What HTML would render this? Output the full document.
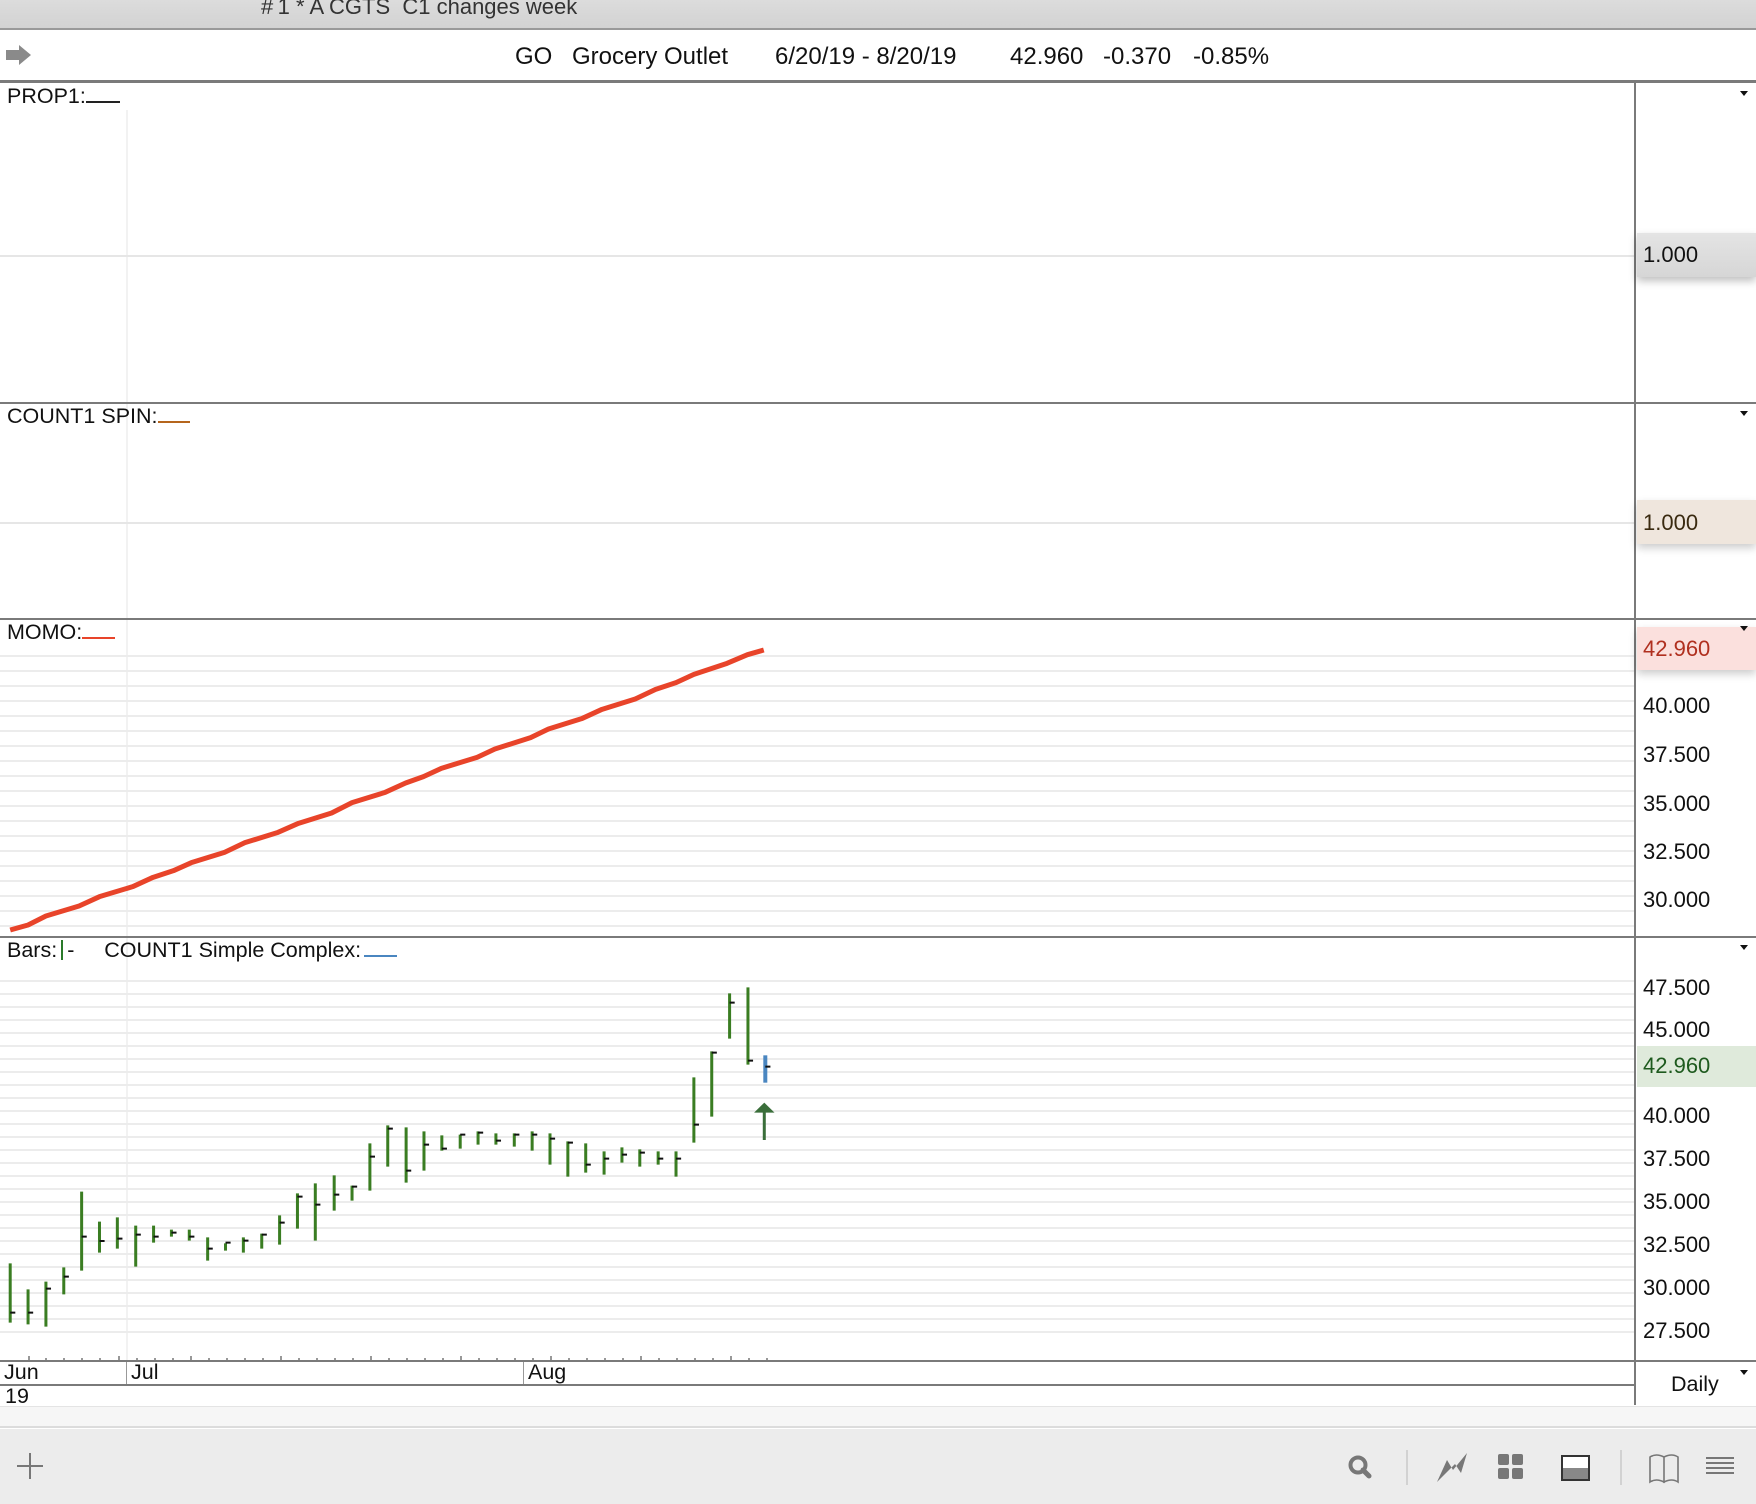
<!DOCTYPE html>
<html><head><meta charset="utf-8"><style>
*{margin:0;padding:0;box-sizing:border-box}
body{width:1756px;height:1504px;background:#fff;position:relative;overflow:hidden;font-family:"Liberation Sans",Arial,sans-serif;color:#111}
.a{position:absolute;white-space:nowrap}
.hl{position:absolute;left:0;height:2px;background:#7a7a7a}
.lbl{font-size:21.5px}
.ax{font-size:22px;left:1643px}
.tri{position:absolute;left:1740px;width:0;height:0;border-left:4px solid transparent;border-right:4px solid transparent;border-top:5px solid #111}
.grid{position:absolute;left:0;width:1634px;background:repeating-linear-gradient(to bottom,#ececec 0,#ececec 2px,transparent 2px,transparent 15px)}
.h{top:43px;font-size:24px}
</style></head><body>
<div class="a" style="left:0;top:0;width:1756px;height:29px;background:linear-gradient(#dcdcdc,#d2d2d2)"></div>
<div class="a" style="left:261px;top:-6px;font-size:22px;color:#333">#&thinsp;1 * A CGTS&nbsp; C1 changes week</div>
<div class="hl" style="top:28px;width:1756px;height:2px;background:#999"></div>
<svg class="a" style="left:5px;top:44px" width="28" height="22"><path d="M1 6h13V1l12 10-12 10v-5H1z" fill="#8a8a8a"/></svg>
<div class="a h" style="left:515px">GO</div>
<div class="a h" style="left:572px">Grocery Outlet</div>
<div class="a h" style="left:775px">6/20/19 - 8/20/19</div>
<div class="a h" style="left:1010px">42.960</div>
<div class="a h" style="left:1103px">-0.370</div>
<div class="a h" style="left:1193px">-0.85%</div>
<div class="hl" style="top:80px;width:1756px;height:3px"></div>
<div class="a" style="left:1634px;top:83px;width:2px;height:1322px;background:#7a7a7a"></div>
<div class="a" style="left:126px;top:110px;width:2px;height:1250px;background:#f2f2f2"></div>

<div class="a lbl" style="left:7px;top:84px">PROP1:<span style="display:inline-block;width:34px;border-bottom:2px solid #222"></span></div>
<div class="a" style="left:0;top:255px;width:1634px;height:2px;background:#e6e6e6"></div>
<div class="tri" style="top:91px"></div>
<div class="a" style="left:1637px;top:233px;width:119px;height:44px;background:linear-gradient(#e4e4e4,#d6d6d6);box-shadow:0 4px 8px rgba(0,0,0,.25)"></div>
<div class="a ax" style="top:242px">1.000</div>
<div class="hl" style="top:402px;width:1756px"></div>

<div class="a lbl" style="left:7px;top:404px">COUNT1 SPIN:<span style="display:inline-block;width:32px;border-bottom:2px solid #b5651d"></span></div>
<div class="a" style="left:0;top:522px;width:1634px;height:2px;background:#e6e6e6"></div>
<div class="tri" style="top:411px"></div>
<div class="a" style="left:1637px;top:500px;width:119px;height:44px;background:#efe6dd;box-shadow:0 4px 8px rgba(0,0,0,.2)"></div>
<div class="a ax" style="top:510px;color:#3a2a10">1.000</div>
<div class="hl" style="top:618px;width:1756px"></div>

<div class="grid" style="top:655px;height:280px"></div>
<div class="a lbl" style="left:7px;top:620px">MOMO:<span style="display:inline-block;width:33px;border-bottom:2px solid #e8442a"></span></div>
<div class="a" style="left:1637px;top:627px;width:119px;height:43px;background:#fbe0dd;box-shadow:0 4px 8px rgba(0,0,0,.2)"></div>
<div class="tri" style="top:626px"></div>
<svg class="a" style="left:0;top:620px" width="800" height="320" viewBox="0 0 1568 960" preserveAspectRatio="none"><polyline fill="none" stroke="#e8442a" stroke-width="5" vector-effect="non-scaling-stroke" stroke-linejoin="round" points="20,930 55,915 90,888 155,858 195,830 260,800 300,772 340,752 375,728 440,697 480,668 545,637 585,610 650,579 690,548 755,517 795,489 830,470 865,445 935,412 970,387 1040,353 1075,327 1140,296 1180,268 1245,237 1285,208 1325,188 1360,163 1425,130 1465,104 1497,90"/></svg>
<div class="a ax" style="top:636px;color:#b0301f">42.960</div>
<div class="a ax" style="top:693px">40.000</div>
<div class="a ax" style="top:742px">37.500</div>
<div class="a ax" style="top:791px">35.000</div>
<div class="a ax" style="top:839px">32.500</div>
<div class="a ax" style="top:887px">30.000</div>
<div class="hl" style="top:936px;width:1756px"></div>

<div class="grid" style="top:980px;height:360px;background:repeating-linear-gradient(to bottom,#ececec 0,#ececec 2px,transparent 2px,transparent 13px)"></div>
<div class="a lbl" style="left:7px;top:938px">Bars:<span style="display:inline-block;width:2px;height:20px;background:#2a7a2a;vertical-align:-3px;margin:0 4px"></span>-&nbsp;&nbsp;&nbsp;&nbsp; COUNT1 Simple Complex:<span style="display:inline-block;width:33px;border-bottom:2px solid #4a86c0;margin-left:3px"></span></div>
<div class="tri" style="top:945px"></div>
<svg class="a" style="left:0;top:940px" width="800" height="420" viewBox="0 0 1568 1260" preserveAspectRatio="none">
<g stroke="#3a7d22" stroke-width="3">
<path vector-effect="non-scaling-stroke" d="M20 970V1148M55 1048V1153M90 1025V1160M125 982V1063M160 755V992M195 845V938M230 832V926M266 857V980M301 857V908M336 869V890M371 869V902M407 892V962M442 910V932M477 892V938M513 881V926M548 826V914M583 760V866M618 730V902M655 706V812M690 737V782M725 610V752M760 556V680M796 562V728M831 574V692M866 586V632M902 584V626M937 574V614M972 580V614M1008 580V620M1043 574V632M1078 580V674M1113 604V710M1148 610V698M1184 634V704M1219 622V668M1254 628V680M1290 634V674M1325 634V710M1360 412V608M1395 334V530M1430 160V296M1466 142V374"/>
</g>
<path vector-effect="non-scaling-stroke" d="M1500 346V428" stroke="#4a86c0" stroke-width="4"/>
<g stroke="#111" stroke-width="2">
<path vector-effect="non-scaling-stroke" d="M20 1118h10M55 1118h10M90 1046h10M125 1010h10M160 890h10M195 903h10M230 896h10M266 884h10M301 890h10M336 878h10M371 890h10M407 926h10M442 908h10M477 902h10M513 884h10M548 848h10M583 770h10M618 794h10M655 764h10M690 740h10M725 650h10M760 566h10M796 692h10M831 614h10M866 626h10M902 584h10M937 578h10M972 602h10M1008 584h10M1043 584h10M1078 596h10M1113 608h10M1148 674h10M1184 656h10M1219 644h10M1254 638h10M1290 656h10M1325 656h10M1360 554h10M1395 338h10M1430 188h10M1466 362h10M1500 380h10"/>
</g>
<path vector-effect="non-scaling-stroke" d="M1498 515V600" stroke="#3a6e3a" stroke-width="3"/>
<path d="M1478 518L1498 488L1518 518Z" fill="#3a6e3a"/>
</svg>
<div class="a" style="left:1637px;top:1046px;width:119px;height:41px;background:#dfeadb"></div>
<div class="a ax" style="top:975px">47.500</div>
<div class="a ax" style="top:1017px">45.000</div>
<div class="a ax" style="top:1053px;color:#1e5a1e">42.960</div>
<div class="a ax" style="top:1103px">40.000</div>
<div class="a ax" style="top:1146px">37.500</div>
<div class="a ax" style="top:1189px">35.000</div>
<div class="a ax" style="top:1232px">32.500</div>
<div class="a ax" style="top:1275px">30.000</div>
<div class="a ax" style="top:1318px">27.500</div>
<svg class="a" style="left:0;top:1352px" width="800" height="10"><g stroke="#777" stroke-width="1.5"><path d="M29 4v6M46 6v4M64 6v4M82 6v4M100 6v4M119 4v6M137 6v4M155 6v4M173 6v4M191 4v6M209 6v4M227 6v4M245 6v4M263 6v4M281 4v6M299 6v4M317 6v4M335 6v4M353 6v4M371 4v6M389 6v4M407 6v4M425 6v4M443 6v4M461 4v6M479 6v4M497 6v4M515 6v4M533 6v4M551 4v6M569 6v4M587 6v4M605 6v4M623 6v4M641 4v6M659 6v4M677 6v4M695 6v4M713 6v4M731 4v6M749 6v4M767 6v4"/></g></svg>
<div class="hl" style="top:1360px;width:1756px"></div>
<div class="a" style="left:126px;top:1362px;width:1px;height:22px;background:#999"></div>
<div class="a" style="left:523px;top:1362px;width:1px;height:22px;background:#999"></div>
<div class="a lbl" style="left:4px;top:1360px">Jun</div>
<div class="a lbl" style="left:131px;top:1360px">Jul</div>
<div class="a lbl" style="left:528px;top:1360px">Aug</div>
<div class="hl" style="top:1384px;width:1634px"></div>
<div class="a lbl" style="left:5px;top:1384px">19</div>
<div class="a lbl" style="left:1671px;top:1372px">Daily</div>
<div class="tri" style="top:1370px"></div>
<div class="a" style="left:0;top:1406px;width:1756px;height:22px;background:#f6f6f6;border-top:1px solid #e4e4e4;border-bottom:2px solid #dcdcdc"></div>
<div class="a" style="left:0;top:1429px;width:1756px;height:75px;background:#ececec"></div>
<svg class="a" style="left:0;top:1429px" width="1756" height="75">
<path d="M30 24v26M17 37h26" stroke="#777" stroke-width="2"/>
<circle cx="1358" cy="36" r="7.5" fill="none" stroke="#777" stroke-width="4"/>
<path d="M1363 41l6 6" stroke="#777" stroke-width="5" stroke-linecap="round"/>
<path d="M1407 21v35M1621 21v35" stroke="#d2d2d2" stroke-width="2"/>
<path d="M1437 53l10-22 6 10 14-17-6 20-6-9z" fill="#777"/>
<g fill="#777"><rect x="1498" y="25" width="11" height="11" rx="2"/><rect x="1512" y="25" width="11" height="11" rx="2"/><rect x="1498" y="39" width="11" height="11" rx="2"/><rect x="1512" y="39" width="11" height="11" rx="2"/></g>
<rect x="1562" y="27" width="27" height="24" fill="#fff" stroke="#333" stroke-width="2"/>
<rect x="1563" y="39" width="25" height="11" fill="#888"/>
<path d="M1650 28q6-4 14 0v25q-8-4-14 0zM1664 28q8-4 14 0v25q-6-4-14 0z" fill="none" stroke="#777" stroke-width="1.6"/>
<path d="M1706 29h28M1706 34h28M1706 39h28M1706 44h28" stroke="#777" stroke-width="2"/>
</svg>
</body></html>
